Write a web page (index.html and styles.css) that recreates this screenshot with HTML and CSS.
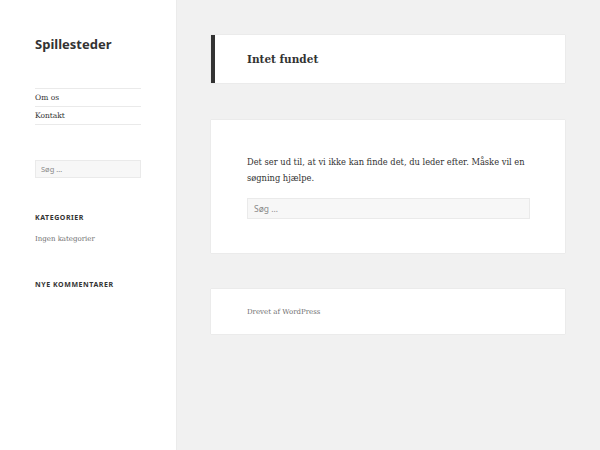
FILE: index.html
```html
<!DOCTYPE html>
<html lang="da">
<head>
    <meta charset="UTF-8">
    <meta name="viewport" content="width=device-width, initial-scale=1.0">
    <title>Intet fundet – Spillesteder</title>
    <link rel="stylesheet" href="styles.css">
</head>
<body>
    <div class="site">
        <aside class="sidebar">
            <p class="site-title">Spillesteder</p>

            <nav class="main-nav">
                <a href="#">Om os</a>
                <a href="#">Kontakt</a>
            </nav>

            <div class="widget search-widget">
                <input class="search-field" type="search" placeholder="Søg …">
            </div>

            <div class="widget">
                <h2 class="widget-title">Kategorier</h2>
                <p class="widget-text">Ingen kategorier</p>
            </div>

            <div class="widget">
                <h2 class="widget-title">Nye kommentarer</h2>
            </div>
        </aside>

        <main class="content">
            <header class="page-header">
                <h1 class="page-title">Intet fundet</h1>
            </header>

            <section class="page-body">
                <p>Det ser ud til, at vi ikke kan finde det, du leder efter. Måske vil en søgning hjælpe.</p>
                <input class="search-field wide" type="search" placeholder="Søg …">
            </section>

            <footer class="site-footer">
                <a href="#">Drevet af WordPress</a>
            </footer>
        </main>
    </div>
</body>
</html>
```

FILE: styles.css
```css
html, body {
    margin: 0;
    padding: 0;
}

body {
    font-family: "DejaVu Serif", "Liberation Serif", serif;
    background-color: #f1f1f1;
    color: #333;
}

a {
    color: #333;
    text-decoration: none;
}

.site {
    display: flex;
    min-height: 450px;
}

.sidebar {
    width: 106px;
    padding: 0 35px;
    background-color: #fff;
    box-shadow: 0 0 1px rgba(0, 0, 0, 0.15);
    flex-shrink: 0;
}

.site-title {
    font-family: "Noto Sans", sans-serif;
    font-weight: bold;
    font-size: 13px;
    line-height: 18px;
    margin: 35px 0 0 0;
}

.main-nav {
    margin-top: 35px;
    border-top: 1px solid #eaeaea;
    display: flex;
    flex-direction: column;
}

.main-nav a {
    font-size: 7.5px;
    line-height: 17px;
    border-bottom: 1px solid #eaeaea;
}

.widget {
    margin-top: 35px;
}

.search-field {
    box-sizing: border-box;
    display: block;
    width: 100%;
    height: 18px;
    padding: 0 5px;
    font-family: "Noto Sans", sans-serif;
    font-size: 7.5px;
    background-color: #f7f7f7;
    border: 1px solid #eaeaea;
    color: #333;
    outline: none;
}

.search-field::placeholder {
    color: #8a8a8a;
}

.widget-title {
    font-family: "Noto Sans", sans-serif;
    font-weight: bold;
    font-size: 7px;
    letter-spacing: 0.08em;
    text-transform: uppercase;
    line-height: 10px;
    margin: 0;
}

.widget-text {
    font-size: 7px;
    line-height: 12px;
    color: #707070;
    margin: 10px 0 0 0;
}

.content {
    flex: 1;
    padding: 35px;
    display: flex;
    flex-direction: column;
    gap: 36px;
}

.page-header,
.page-body,
.site-footer {
    background-color: #fff;
    box-shadow: 0 0 1px rgba(0, 0, 0, 0.15);
    padding: 0 35px 0 36px;
}

.page-header {
    border-left: 4px solid #333;
    padding-left: 32px;
    height: 48px;
    margin-bottom: 1px;
    display: flex;
    align-items: center;
}

.page-title {
    font-size: 10.5px;
    font-weight: bold;
    margin: 0;
}

.page-body {
    padding-top: 34px;
    padding-bottom: 34px;
}

.page-body p {
    font-size: 8.3px;
    line-height: 16px;
    margin: 0 0 12px 0;
}

.search-field.wide {
    height: 21px;
    font-size: 8.5px;
    width: 283px;
    padding: 0 6px;
}

.site-footer {
    height: 45px;
    display: flex;
    align-items: center;
}

.site-footer a {
    font-size: 7px;
    color: #707070;
    padding-top: 1px;
}
```
